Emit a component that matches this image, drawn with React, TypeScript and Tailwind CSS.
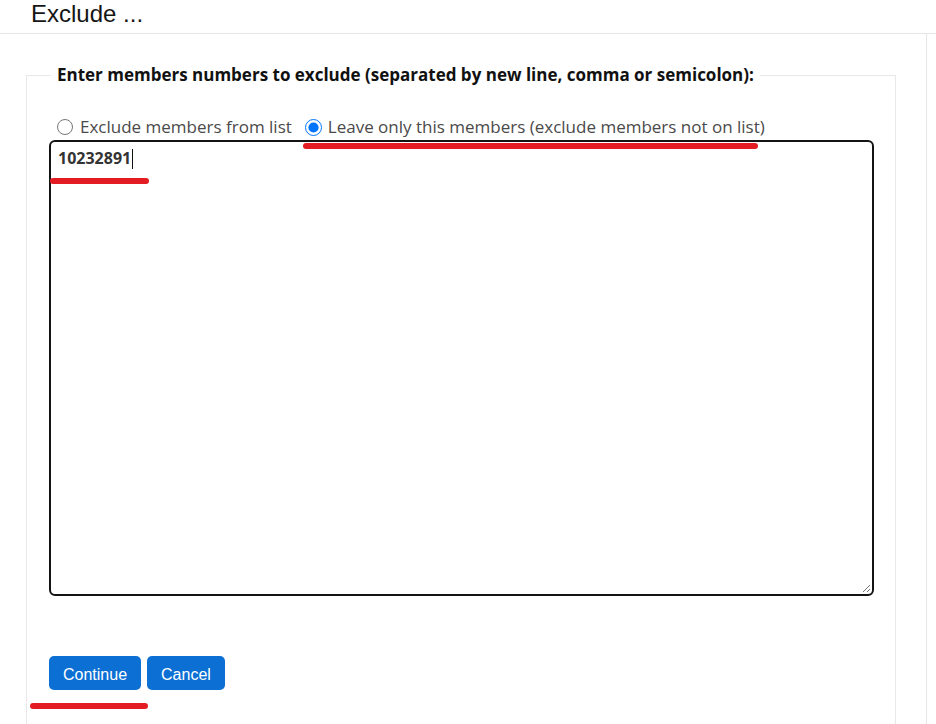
import React from "react";

function Mark({ className }: { className: string }) {
  return <span className={`absolute h-[6px] rounded-full bg-[#e31b23] ${className}`} />;
}

export default function App() {
  return (
    <div className="relative w-[936px] h-[724px] overflow-hidden bg-white font-['Open_Sans',sans-serif]">
      <div className="h-[34px] border-b border-[#e6e6e6] pl-[31px]">
        <h1 className="font-['Liberation_Sans',Arial,sans-serif] text-[24px] leading-[28px] text-[#151515]">
          Exclude ...
        </h1>
      </div>

      <div className="w-[927px] h-[690px] border-r border-[#e6e6e6] pt-[30px]">
        <fieldset className="ml-[26px] w-[870px] h-[700px] border border-[#e8e8e8] pl-[22px]">
          <legend className="ml-[2px] px-[6px] text-[17px] leading-[22px] font-bold text-[#111]">
            Enter members numbers to exclude (separated by new line, comma or semicolon):
          </legend>

          <div className="mt-[29px] pl-[8px] flex items-center text-[17px] leading-[24px] text-[#4a4a4a]">
            <label className="flex items-center">
              <input type="radio" name="mode" className="m-0 w-[16px] h-[16px] accent-[#0075ff]" readOnly />
              <span className="ml-[7px]">Exclude members from list</span>
            </label>
            <label className="flex items-center ml-[13px]">
              <input type="radio" name="mode" className="m-0 w-[17px] h-[17px] accent-[#0075ff]" defaultChecked />
              <span className="ml-[6px]">Leave only this members (exclude members not on list)</span>
            </label>
          </div>

          <div className="relative mt-[1px] w-[825px] h-[456px] rounded-[6px] border-2 border-[#141414] px-[7px] pt-[4px]">
            <span className="text-[16px] leading-[24px] font-bold text-[#333]">10232891</span>
            <span className="inline-block align-middle w-px h-[20px] bg-[#111] ml-px -mt-[2px]" />
            <svg className="absolute right-[1px] bottom-[1px]" width="10" height="10" viewBox="0 0 10 10">
              <path d="M9 2 L2 9 M9 6 L6 9" stroke="#777" strokeWidth="1" />
            </svg>
          </div>

          <div className="mt-[60px] flex gap-[6px] font-['Liberation_Sans',Arial,sans-serif] text-[16px]">
            <button className="h-[34px] px-[14px] pt-[3px] rounded-[5px] bg-[#0b6fd4] text-white">Continue</button>
            <button className="h-[34px] px-[14px] pt-[3px] rounded-[5px] bg-[#0b6fd4] text-white">Cancel</button>
          </div>
        </fieldset>
      </div>

      <Mark className="left-[303px] top-[143px] w-[455px]" />
      <Mark className="left-[50px] top-[178px] w-[99px]" />
      <Mark className="left-[30px] top-[703px] w-[118px]" />
    </div>
  );
}
